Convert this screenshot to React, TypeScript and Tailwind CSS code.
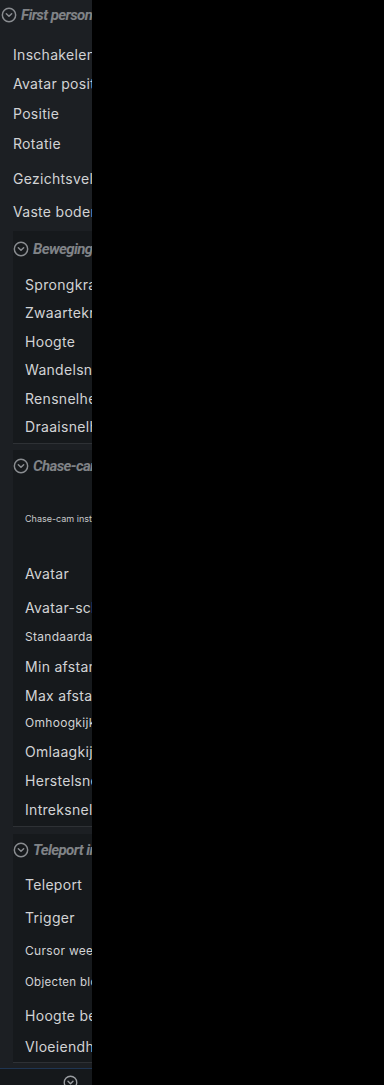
import { CircleChevronDown } from "lucide-react";

type Row = { label: string; cls: string; small?: boolean; tiny?: boolean };

const topRows: Row[] = [
    { label: "Inschakelen", cls: "h-[29px]" },
    { label: "Avatar positie", cls: "h-[29px]" },
    { label: "Positie", cls: "h-[30px]" },
    { label: "Rotatie", cls: "h-[31px]" },
    { label: "Gezichtsveld", cls: "h-[38px]" },
    { label: "Vaste bodem", cls: "h-[29px]" },
];

const bewegingRows: Row[] = [
    { label: "Sprongkracht", cls: "h-[28.5px]" },
    { label: "Zwaartekracht", cls: "h-[28.5px]" },
    { label: "Hoogte", cls: "h-[28.5px]" },
    { label: "Wandelsnelheid", cls: "h-[28.5px]" },
    { label: "Rensnelheid", cls: "h-[28.5px]" },
    { label: "Draaisnelheid", cls: "h-[28.5px]" },
];

const chaseRows: Row[] = [
    { label: "Avatar", cls: "h-[28px] mt-[3px]" },
    { label: "Avatar-schaal", cls: "h-[28px] mt-[6px]" },
    { label: "Standaardafstand", cls: "h-[28px] mt-[2px]", small: true },
    { label: "Min afstand", cls: "h-[28px] mt-[1px]" },
    { label: "Max afstand", cls: "h-[28px] mt-[1px]" },
    { label: "Omhoogkijkhoek", cls: "h-[28px]", small: true },
    { label: "Omlaagkijkhoek", cls: "h-[28px]" },
    { label: "Herstelsnelheid", cls: "h-[28px] mt-[1px]" },
    { label: "Intreksnelheid", cls: "h-[28px] mt-[1px]" },
];

const teleportRows: Row[] = [
    { label: "Teleport", cls: "h-[28px] mt-[4px]" },
    { label: "Trigger", cls: "h-[28px] mt-[5px]" },
    { label: "Cursor weergeven", cls: "h-[28px] mt-[6px]", small: true },
    { label: "Objecten blokkeren", cls: "h-[28px] mt-[4px]", tiny: true },
    { label: "Hoogte beperken", cls: "h-[28px] mt-[4px]" },
    { label: "Vloeiendheid", cls: "h-[28px] mt-[3px]" },
];

const RowItem = ({ row }: { row: Row }) => (
    <div
        className={`flex items-center whitespace-nowrap tracking-[0.3px] text-[#d2d3d5] ${row.cls} ${
            row.tiny ? "text-[11.5px]" : row.small ? "text-[12px]" : "text-[14px]"
        }`}
    >
        {row.label}
    </div>
);

const Header = ({ title, cls }: { title: string; cls: string }) => (
    <div className={`flex items-center gap-[4px] whitespace-nowrap ${cls}`}>
        <CircleChevronDown size={16} strokeWidth={2.2} className="shrink-0 text-[#8a8d91]" />
        <span
            className="text-[15px] font-bold italic tracking-[-0.6px] text-[#808387]"
            style={{ fontFamily: "Roboto, sans-serif" }}
        >
            {title}
        </span>
    </div>
);

export default function App() {
    return (
        <div className="flex h-[1085px] w-[384px] bg-black">
            <div
                className="flex h-full w-[92px] flex-col overflow-hidden bg-[#1c1f23]"
                style={{ fontFamily: "Inter, 'Open Sans', sans-serif" }}
            >
                <div className="w-[260px]">
                    <Header title="First person" cls="h-[30px] pl-[1px]" />

                    <div className="mt-[10px] pl-[13px]">
                        {topRows.map((r) => (
                            <RowItem key={r.label} row={r} />
                        ))}
                    </div>

                    {/* Beweging */}
                    <div className="ml-[13px] mt-[5px] border-b border-[#2e3135] bg-[#16191c] pb-[2px]">
                        <Header title="Beweging" cls="h-[36px]" />
                        <div className="mt-[3px] pl-[12px]">
                            {bewegingRows.map((r) => (
                                <RowItem key={r.label} row={r} />
                            ))}
                        </div>
                    </div>

                    {/* Chase-cam */}
                    <div className="ml-[13px] border-b border-[#2e3135] bg-[#16191c] pb-[3px]">
                        <Header title="Chase-cam instellingen" cls="h-[32px] mt-[6px]" />
                        <div className="pl-[12px]">
                            <div className="flex h-[74px] items-center whitespace-nowrap text-[9px] text-[#c8c9cb]">
                                Chase-cam instellingen voor de avatar
                            </div>
                            {chaseRows.map((r) => (
                                <RowItem key={r.label} row={r} />
                            ))}
                        </div>
                    </div>

                    {/* Teleport */}
                    <div className="ml-[13px] border-b border-[#2e3135] bg-[#16191c] pb-[2px]">
                        <Header title="Teleport instellingen" cls="h-[32px] mt-[7px]" />
                        <div className="pl-[12px]">
                            {teleportRows.map((r) => (
                                <RowItem key={r.label} row={r} />
                            ))}
                        </div>
                    </div>

                    <div className="mt-[5px] flex h-[20px] w-[140px] justify-center border-t border-[#1f3552] bg-[#15181b] pt-[6px]">
                        <CircleChevronDown size={15} strokeWidth={2.2} className="text-[#9a9da1]" />
                    </div>
                </div>
            </div>
        </div>
    );
}
